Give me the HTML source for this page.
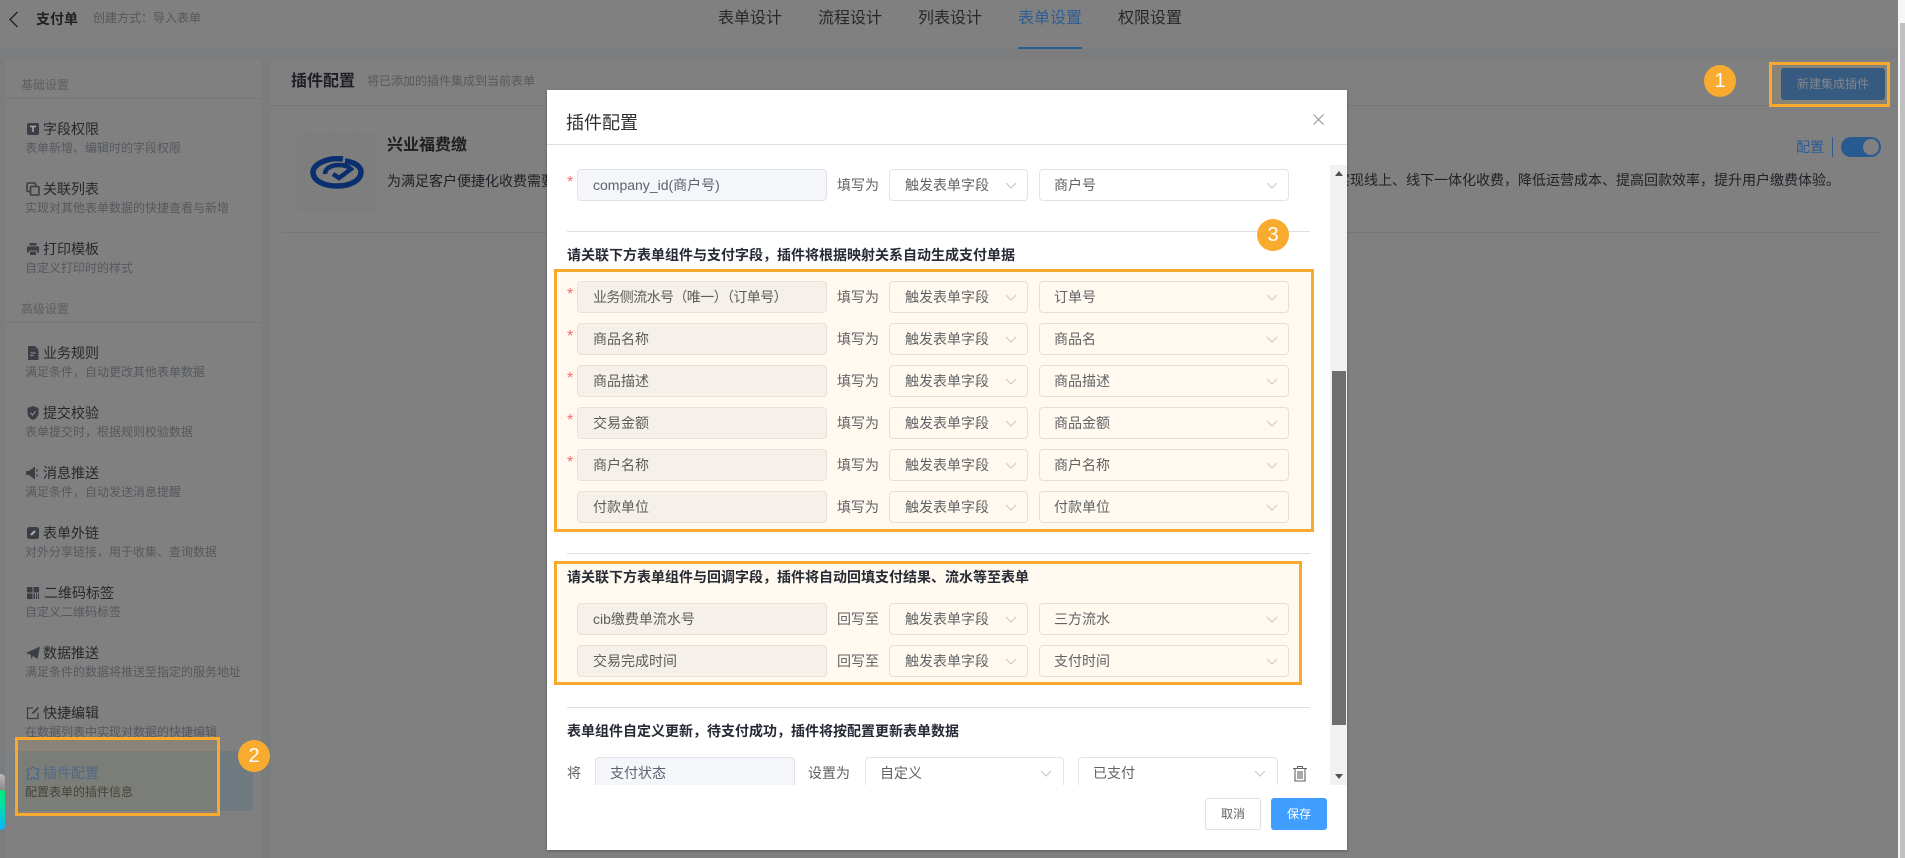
<!DOCTYPE html>
<html lang="zh-CN">
<head>
<meta charset="utf-8">
<title>插件配置</title>
<style>
*{box-sizing:border-box;margin:0;padding:0}
html,body{width:1905px;height:858px;overflow:hidden;background:#7b7c7e;font-family:"Liberation Sans","Noto Sans CJK SC",sans-serif}
.a{position:absolute;white-space:nowrap}
.t{position:absolute;white-space:nowrap;line-height:20px;height:20px}
.s14{font-size:14px}.s12{font-size:12px}.s16{font-size:16px}
.hd{left:0;top:0;width:1898px;height:48px;background:#808080;position:absolute}
.tab{position:absolute;top:9px;font-size:16px;line-height:20px;color:#272727;white-space:nowrap}
.side{position:absolute;left:5px;top:59px;width:256px;height:799px;background:#808080}
.main{position:absolute;left:271px;top:59px;width:1627px;height:799px;background:#808080}
.ln{position:absolute;height:1px;background:#76777a}
.it{position:absolute;left:43px;font-size:14px;line-height:20px;color:#26282c;white-space:nowrap}
.de{position:absolute;left:25px;font-size:12px;line-height:18px;color:#55585d;white-space:nowrap;transform:translateY(1px)}
.lb{position:absolute;left:21px;font-size:12px;line-height:18px;color:#5b5e62;white-space:nowrap}
.ic{position:absolute;left:26px;width:14px;height:14px}
.badge{position:absolute;width:32px;height:32px;border-radius:50%;background:#f9ab2f;color:#fff;font-size:20px;line-height:32px;text-align:center;font-family:"Liberation Sans",sans-serif}
.obox{position:absolute;border:3px solid #f9a92e;background:rgba(249,171,47,.09)}
.modal{position:absolute;left:547px;top:90px;width:800px;height:760px;background:#fff;box-shadow:0 1px 3px rgba(0,0,0,.3)}
.box{position:absolute;border:3px solid #f9a92e;background:#fff9ef}
.dv{position:absolute;left:567px;width:743px;height:1px;background:#dcdfe6}
.h3{position:absolute;left:567px;font-size:14px;font-weight:700;line-height:20px;color:#262a35;white-space:nowrap}
.ip,.se{position:absolute;height:32px;border:1px solid #e0e3e9;border-radius:4px;font-size:14px;line-height:30px;color:#606266;white-space:nowrap;padding-left:14px}
.ip{left:577px;width:250px;background:#f5f6fa;color:#5c6270;padding-left:15px}
.se{background:#fff}
.s1{left:889px;width:139px;padding-left:15px}
.s2{left:1039px;width:250px;padding-left:14px}
.o.ip{background:#f5f1ea;border-color:#e6e2da;color:#5d5c5a}
.o.se{background:#fff9ef;border-color:#e4e0d8}
.se svg{position:absolute;right:10px;top:12px}
.se.s2 svg{right:10px}
.la{position:absolute;left:837px;font-size:14px;line-height:32px;color:#606266;white-space:nowrap}
.st{position:absolute;left:567px;font-size:16px;line-height:14px;color:#f56c6c;transform:translateY(-1px)}
</style>
</head>
<body>

<!-- header -->
<div class="hd"></div>
<svg class="a" style="left:8px;top:11px" width="11" height="17" viewBox="0 0 11 17"><path d="M9.5 1 2 8.5 9.5 16" fill="none" stroke="#222" stroke-width="1.3"/></svg>
<div class="t s14" style="left:36px;top:9px;font-weight:700;color:#222">支付单</div>
<div class="t s12" style="left:93px;top:8px;color:#565656">创建方式：导入表单</div>
<div class="tab" style="left:718px">表单设计</div>
<div class="tab" style="left:818px">流程设计</div>
<div class="tab" style="left:918px">列表设计</div>
<div class="tab" style="left:1018px;color:#2e5c94">表单设置</div>
<div class="tab" style="left:1118px">权限设置</div>
<div class="a" style="left:1018px;top:47px;width:64px;height:2px;background:#2a5c98"></div>

<!-- sidebar -->
<div class="side"></div>
<div class="lb" style="top:76px">基础设置</div>
<div class="ln" style="left:5px;top:98px;width:256px"></div>

<svg class="ic" style="top:122px" viewBox="0 0 14 14"><rect x="1" y="1" width="12" height="12" rx="2" fill="#3b3e44"/><path d="M4 4.500h6M7 4.500v5.500" stroke="#aaa" stroke-width="1.500"/></svg>
<div class="it" style="top:119px">字段权限</div>
<div class="de" style="top:138px">表单新增、编辑时的字段权限</div>

<svg class="ic" style="top:182px" viewBox="0 0 14 14"><rect x="1" y="1" width="8.500" height="8.500" rx="1" fill="none" stroke="#3b3e44" stroke-width="1.600"/><rect x="4.500" y="4.500" width="8.500" height="8.500" rx="1" fill="#808080" stroke="#3b3e44" stroke-width="1.600"/></svg>
<div class="it" style="top:179px">关联列表</div>
<div class="de" style="top:198px">实现对其他表单数据的快捷查看与新增</div>

<svg class="ic" style="top:242px" viewBox="0 0 14 14"><path d="M3.500 1h7v2.500h-7zM1 4.500h12v6h-2V8.500H3v2H1zM4 9.500h6V13H4z" fill="#3b3e44"/></svg>
<div class="it" style="top:239px">打印模板</div>
<div class="de" style="top:258px">自定义打印时的样式</div>

<div class="lb" style="top:300px">高级设置</div>
<div class="ln" style="left:5px;top:322px;width:256px"></div>

<svg class="ic" style="top:346px" viewBox="0 0 14 14"><path d="M2 0h7l3.500 3.500V14H2z" fill="#3b3e44"/><path d="M4.500 7h5M4.500 9.500h3" stroke="#999" stroke-width="1"/></svg>
<div class="it" style="top:343px">业务规则</div>
<div class="de" style="top:362px">满足条件，自动更改其他表单数据</div>

<svg class="ic" style="top:406px" viewBox="0 0 14 14"><path d="M7 0 12.500 2v5c0 3.500-2.500 5.700-5.500 7-3-1.300-5.500-3.500-5.500-7V2z" fill="#3b3e44"/><path d="M4.500 7 6.500 9 9.500 5" stroke="#999" stroke-width="1" fill="none"/></svg>
<div class="it" style="top:403px">提交校验</div>
<div class="de" style="top:422px">表单提交时，根据规则校验数据</div>

<svg class="ic" style="top:466px" viewBox="0 0 14 14"><path d="M0 5h3l6-4.500v13L3 9H0z" fill="#3b3e44"/><path d="M11 3.500v2M11 8.500v2" stroke="#3b3e44" stroke-width="1.500"/></svg>
<div class="it" style="top:463px">消息推送</div>
<div class="de" style="top:482px">满足条件，自动发送消息提醒</div>

<svg class="ic" style="top:526px" viewBox="0 0 14 14"><rect x="1" y="1" width="12" height="12" rx="2.500" fill="#3b3e44"/><path d="M5 9 9 5" stroke="#aaa" stroke-width="2.200"/></svg>
<div class="it" style="top:523px">表单外链</div>
<div class="de" style="top:542px">对外分享链接，用于收集、查询数据</div>

<svg class="ic" style="top:586px" viewBox="0 0 14 14"><path d="M1 1h5.500v5.500H1zM7.500 1H13v5.500H7.500zM1 7.500h5.500V13H1zM7.500 7.500h1.500V13H7.500zM10 7.500h1V13h-1zM12 7.500h1V13h-1z" fill="#3b3e44"/></svg>
<div class="it" style="left:44px;top:583px">二维码标签</div>
<div class="de" style="top:602px">自定义二维码标签</div>

<svg class="ic" style="top:646px" viewBox="0 0 14 14"><path d="M14 .5 11.500 13 7 10 5 13V9L0 7z" fill="#3b3e44"/></svg>
<div class="it" style="top:643px">数据推送</div>
<div class="de" style="top:662px">满足条件的数据将推送至指定的服务地址</div>

<svg class="ic" style="top:706px" viewBox="0 0 14 14"><path d="M7 2H1.500v10.500H12V7" fill="none" stroke="#3b3e44" stroke-width="1.300"/><path d="M6.500 7.500 12.500 1.500" stroke="#3b3e44" stroke-width="1.800"/></svg>
<div class="it" style="top:703px">快捷编辑</div>
<div class="de" style="top:722px">在数据列表中实现对数据的快捷编辑</div>

<div class="a" style="left:14px;top:751px;width:239px;height:60px;background:#6f7b80;border-radius:3px"></div>
<svg class="ic" style="top:766px" viewBox="0 0 14 14"><path d="M5 3C5 .5 9 .5 9 3h3.500v3.500c-2 0-2 3 0 3V13H9c0-2-4-2-4 0H1.500V9.500c2 0 2-3 0-3V3z" fill="none" stroke="#3d6294" stroke-width="1.300"/></svg>
<div class="it" style="top:763px;color:#3f6290">插件配置</div>
<div class="de" style="top:782px;color:#38393a">配置表单的插件信息</div>
<div class="obox" style="left:15px;top:737px;width:205px;height:79px"></div>
<div class="badge" style="left:238px;top:740px">2</div>
<div class="a" style="left:0;top:774px;width:5px;height:56px;border-radius:0 4px 4px 0;background:linear-gradient(180deg,#b9b9b9 0,#8a8a8a 28%,#00e97f 30%,#00e0a0 55%,#10b0ff 100%)"></div>

<!-- main -->
<div class="main"></div>
<div class="t s16" style="left:291px;top:72px;font-weight:700;color:#1d1f24">插件配置</div>
<div class="t s12" style="left:367px;top:71px;color:#56595d">将已添加的插件集成到当前表单</div>
<div class="ln" style="left:271px;top:105px;width:1627px"></div>
<div class="a" style="left:297px;top:132px;width:80px;height:80px;background:repeating-conic-gradient(#777 0 25%,#868686 0 50%) 0 0/3px 3px"></div>
<svg class="a" style="left:310px;top:156px" width="54" height="33" viewBox="0 0 54 33">
<path d="M33 3C18 1 3 8 3 16C3 25 14 30 27 30C41 30 51 24 51 16C51 10 44 6 35 5" fill="none" stroke="#0a2f6e" stroke-width="5.500"/>
<path d="M15 18C15 12 22 9 29 9C34 9 38 10 41 13L29 22L23 18" fill="none" stroke="#0a2f6e" stroke-width="4.500"/>
</svg>
<div class="t s16" style="left:387px;top:136px;font-weight:700;color:#1f1f20">兴业福费缴</div>
<div class="t s14" style="left:387px;top:171px;color:#202125">为满足客户便捷化收费需要</div>
<div class="t s14" style="right:65px;top:170px;color:#202125">实现线上、线下一体化收费，降低运营成本、提高回款效率，提升用户缴费体验。</div>
<div class="ln" style="left:282px;top:232px;width:1600px"></div>
<div class="t s14" style="left:1796px;top:137px;color:#2f5c94">配置</div>
<div class="a" style="left:1832px;top:137px;width:1px;height:20px;background:#2f5c94"></div>
<div class="a" style="left:1841px;top:137px;width:40px;height:20px;border-radius:10px;background:#285a92"></div>
<div class="a" style="left:1863px;top:139px;width:16px;height:16px;border-radius:50%;background:#808080"></div>
<div class="obox" style="left:1769px;top:62px;width:121px;height:45px"></div>
<div class="a" style="left:1781px;top:68px;width:104px;height:32px;border-radius:3px;background:#375b80;color:#80878f;font-size:12px;line-height:32px;text-align:center">新建集成插件</div>
<div class="badge" style="left:1704px;top:65px">1</div>

<!-- page scrollbar -->
<div class="a" style="left:1898px;top:0;width:7px;height:858px;background:#f6f6f6"></div>
<div class="a" style="left:1900px;top:23px;width:5px;height:835px;background:#c1c1c1"></div>

<!-- modal -->
<div class="modal"></div>
<div class="t" style="left:566px;top:111px;height:25px;line-height:25px;font-size:18px;color:#303133">插件配置</div>
<svg class="a" style="left:1313px;top:114px" width="11" height="11" viewBox="0 0 11 11"><path d="M.5.500l10 10M10.500.500l-10 10" stroke="#909399" stroke-width="1"/></svg>
<div class="a" style="left:547px;top:144px;width:800px;height:1px;background:#dcdfe6"></div>

<!-- scrollbar -->
<div class="a" style="left:1330px;top:165px;width:17px;height:620px;background:#f1f1f1"></div>
<div class="a" style="left:1332px;top:371px;width:14px;height:354px;background:#6e6e6e"></div>
<svg class="a" style="left:1335px;top:171px" width="8" height="5" viewBox="0 0 8 5"><path d="M4 0 8 5H0z" fill="#505050"/></svg>
<svg class="a" style="left:1335px;top:774px" width="8" height="5" viewBox="0 0 8 5"><path d="M4 5 8 0H0z" fill="#505050"/></svg>

<!-- row 0 -->
<div class="st" style="top:177px">*</div>
<div class="ip" style="top:169px">company_id(商户号)</div>
<div class="la" style="top:169px">填写为</div>
<div class="se s1" style="top:169px">触发表单字段<svg width="12" height="7" viewBox="0 0 12 7"><path d="M1 1l5 5 5-5" fill="none" stroke="#c0c4cc"/></svg></div>
<div class="se s2" style="top:169px">商户号<svg width="12" height="7" viewBox="0 0 12 7"><path d="M1 1l5 5 5-5" fill="none" stroke="#c0c4cc"/></svg></div>

<div class="dv" style="top:231px"></div>
<div class="badge" style="left:1257px;top:219px">3</div>
<div class="h3" style="top:245px">请关联下方表单组件与支付字段，插件将根据映射关系自动生成支付单据</div>

<!-- box 1 -->
<div class="box" style="left:554px;top:269px;width:760px;height:263px"></div>

<div class="st" style="top:289px">*</div>
<div class="ip o" style="top:281px;letter-spacing:-.6px">业务侧流水号（唯一）（订单号）</div>
<div class="la" style="top:281px">填写为</div>
<div class="se s1 o" style="top:281px">触发表单字段<svg width="12" height="7" viewBox="0 0 12 7"><path d="M1 1l5 5 5-5" fill="none" stroke="#c8c8c8"/></svg></div>
<div class="se s2 o" style="top:281px">订单号<svg width="12" height="7" viewBox="0 0 12 7"><path d="M1 1l5 5 5-5" fill="none" stroke="#c8c8c8"/></svg></div>

<div class="st" style="top:331px">*</div>
<div class="ip o" style="top:323px">商品名称</div>
<div class="la" style="top:323px">填写为</div>
<div class="se s1 o" style="top:323px">触发表单字段<svg width="12" height="7" viewBox="0 0 12 7"><path d="M1 1l5 5 5-5" fill="none" stroke="#c8c8c8"/></svg></div>
<div class="se s2 o" style="top:323px">商品名<svg width="12" height="7" viewBox="0 0 12 7"><path d="M1 1l5 5 5-5" fill="none" stroke="#c8c8c8"/></svg></div>

<div class="st" style="top:373px">*</div>
<div class="ip o" style="top:365px">商品描述</div>
<div class="la" style="top:365px">填写为</div>
<div class="se s1 o" style="top:365px">触发表单字段<svg width="12" height="7" viewBox="0 0 12 7"><path d="M1 1l5 5 5-5" fill="none" stroke="#c8c8c8"/></svg></div>
<div class="se s2 o" style="top:365px">商品描述<svg width="12" height="7" viewBox="0 0 12 7"><path d="M1 1l5 5 5-5" fill="none" stroke="#c8c8c8"/></svg></div>

<div class="st" style="top:415px">*</div>
<div class="ip o" style="top:407px">交易金额</div>
<div class="la" style="top:407px">填写为</div>
<div class="se s1 o" style="top:407px">触发表单字段<svg width="12" height="7" viewBox="0 0 12 7"><path d="M1 1l5 5 5-5" fill="none" stroke="#c8c8c8"/></svg></div>
<div class="se s2 o" style="top:407px">商品金额<svg width="12" height="7" viewBox="0 0 12 7"><path d="M1 1l5 5 5-5" fill="none" stroke="#c8c8c8"/></svg></div>

<div class="st" style="top:457px">*</div>
<div class="ip o" style="top:449px">商户名称</div>
<div class="la" style="top:449px">填写为</div>
<div class="se s1 o" style="top:449px">触发表单字段<svg width="12" height="7" viewBox="0 0 12 7"><path d="M1 1l5 5 5-5" fill="none" stroke="#c8c8c8"/></svg></div>
<div class="se s2 o" style="top:449px">商户名称<svg width="12" height="7" viewBox="0 0 12 7"><path d="M1 1l5 5 5-5" fill="none" stroke="#c8c8c8"/></svg></div>

<div class="ip o" style="top:491px">付款单位</div>
<div class="la" style="top:491px">填写为</div>
<div class="se s1 o" style="top:491px">触发表单字段<svg width="12" height="7" viewBox="0 0 12 7"><path d="M1 1l5 5 5-5" fill="none" stroke="#c8c8c8"/></svg></div>
<div class="se s2 o" style="top:491px">付款单位<svg width="12" height="7" viewBox="0 0 12 7"><path d="M1 1l5 5 5-5" fill="none" stroke="#c8c8c8"/></svg></div>

<div class="dv" style="top:553px"></div>

<!-- box 2 -->
<div class="box" style="left:554px;top:561px;width:748px;height:124px"></div>
<div class="h3" style="top:567px">请关联下方表单组件与回调字段，插件将自动回填支付结果、流水等至表单</div>

<div class="ip o" style="top:603px">cib缴费单流水号</div>
<div class="la" style="top:603px">回写至</div>
<div class="se s1 o" style="top:603px">触发表单字段<svg width="12" height="7" viewBox="0 0 12 7"><path d="M1 1l5 5 5-5" fill="none" stroke="#c8c8c8"/></svg></div>
<div class="se s2 o" style="top:603px">三方流水<svg width="12" height="7" viewBox="0 0 12 7"><path d="M1 1l5 5 5-5" fill="none" stroke="#c8c8c8"/></svg></div>

<div class="ip o" style="top:645px">交易完成时间</div>
<div class="la" style="top:645px">回写至</div>
<div class="se s1 o" style="top:645px">触发表单字段<svg width="12" height="7" viewBox="0 0 12 7"><path d="M1 1l5 5 5-5" fill="none" stroke="#c8c8c8"/></svg></div>
<div class="se s2 o" style="top:645px">支付时间<svg width="12" height="7" viewBox="0 0 12 7"><path d="M1 1l5 5 5-5" fill="none" stroke="#c8c8c8"/></svg></div>

<div class="dv" style="top:707px"></div>
<div class="h3" style="top:721px">表单组件自定义更新，待支付成功，插件将按配置更新表单数据</div>

<div class="la" style="left:567px;top:757px">将</div>
<div class="ip" style="left:595px;width:200px;top:757px;padding-left:14px">支付状态</div>
<div class="la" style="left:808px;top:757px">设置为</div>
<div class="se" style="left:865px;width:199px;top:757px">自定义<svg style="right:11px" width="12" height="7" viewBox="0 0 12 7"><path d="M1 1l5 5 5-5" fill="none" stroke="#c0c4cc"/></svg></div>
<div class="se" style="left:1078px;width:200px;top:757px">已支付<svg style="right:11px" width="12" height="7" viewBox="0 0 12 7"><path d="M1 1l5 5 5-5" fill="none" stroke="#c0c4cc"/></svg></div>
<svg class="a" style="left:1292px;top:765px" width="16" height="17" viewBox="0 0 16 17"><path d="M1 3.500h14M5.500 3.500V1.500h5v2M3 3.500V16h10V3.500M6 6v8M8 6v8M10 6v8" fill="none" stroke="#606266" stroke-width="1.100"/></svg>

<!-- footer -->
<div class="a" style="left:547px;top:785px;width:800px;height:65px;background:#fff"></div>
<div class="a" style="left:1205px;top:798px;width:56px;height:32px;border:1px solid #dcdfe6;border-radius:3px;background:#fff;color:#606266;font-size:12px;line-height:30px;text-align:center">取消</div>
<div class="a" style="left:1271px;top:798px;width:56px;height:32px;border-radius:3px;background:#409eff;color:#fff;font-size:12px;line-height:32px;text-align:center">保存</div>

</body>
</html>
